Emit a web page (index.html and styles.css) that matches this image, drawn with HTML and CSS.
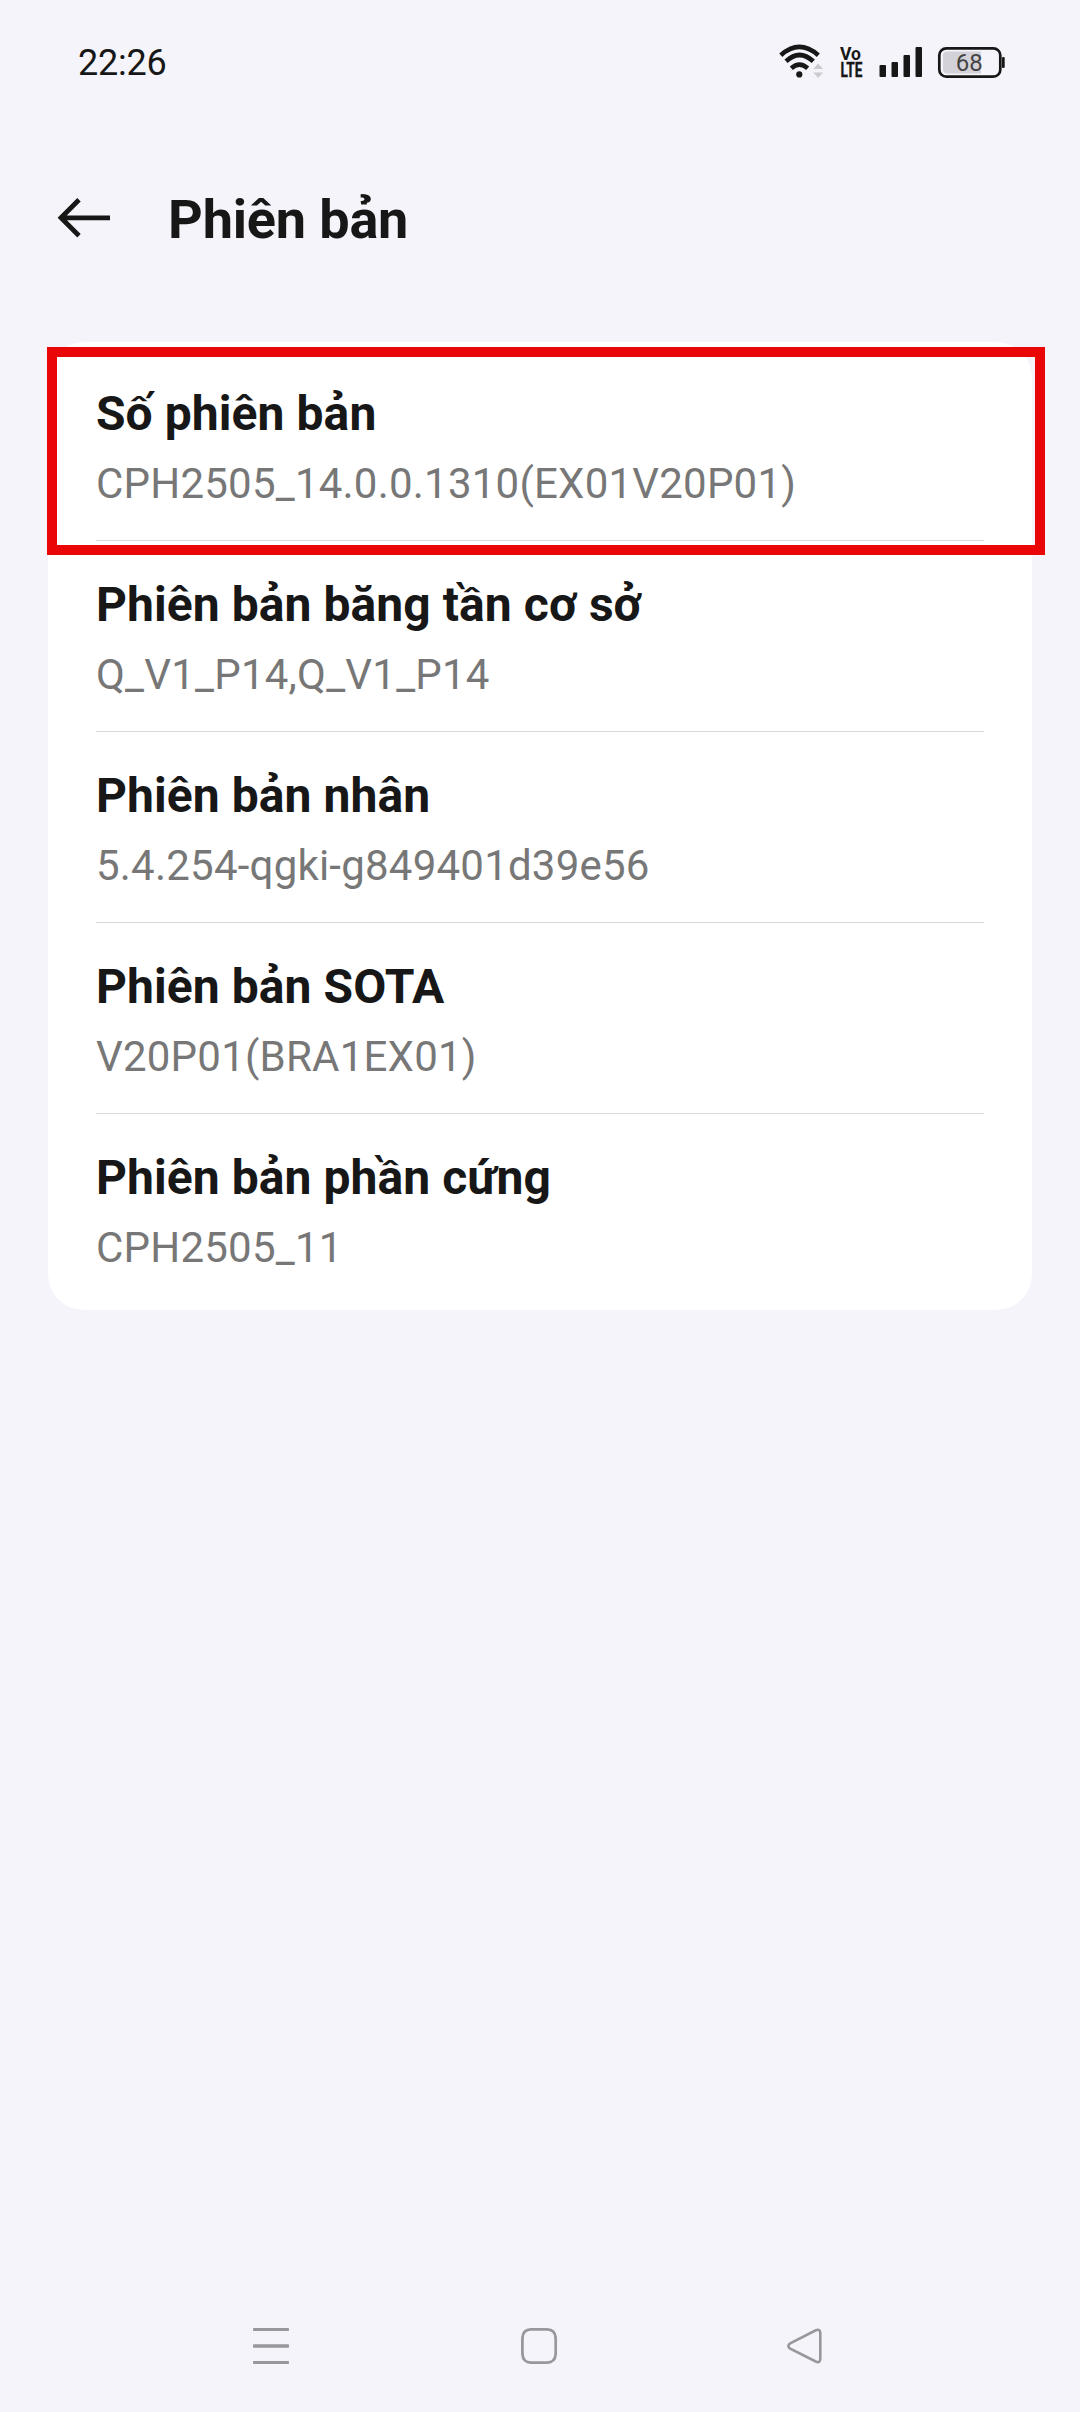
FILE: index.html
```html
<!DOCTYPE html>
<html lang="vi">
<head>
<meta charset="utf-8">
<title>Phiên bản</title>
<link rel="stylesheet" href="styles.css">
</head>
<body>
<div class="screen">
  <div class="status">
    <span class="time">22:26</span>
    <svg class="status-icons" width="230" height="40" viewBox="776 42 230 40">
      <g fill="none" stroke="#171717" stroke-width="4.6">
        <path d="M780.8 55.2Q799.3 38.6 818.3 55.2"/>
        <path d="M786 61.3Q799.5 48.7 813.3 61.3"/>
        <path d="M791.3 68.2Q799.4 61 807.7 68.2"/>
      </g>
      <circle cx="799.3" cy="74.4" r="3.1" fill="#171717"/>
      <path d="M813.3 69L818.2 63.5L823 69ZM813.3 72.5H823L818.2 78Z" fill="#cbcbce"/>
      <g class="volte">
        <text x="840" y="59.8" font-size="18" textLength="21" lengthAdjust="spacingAndGlyphs">Vo</text>
        <text x="840.5" y="76.6" font-size="19.5" textLength="22" lengthAdjust="spacingAndGlyphs" stroke="#171717" stroke-width=".4">LTE</text>
      </g>
      <g fill="#171717">
        <rect x="879.5" y="65" width="6.5" height="12" rx="1"/>
        <rect x="891.5" y="62" width="6.5" height="15" rx="1"/>
        <rect x="903.5" y="55" width="6.5" height="22" rx="1"/>
        <rect x="915.5" y="47" width="6.5" height="30" rx="1"/>
        <rect x="1002" y="57" width="2.7" height="11" rx="1"/>
      </g>
      <path d="M947 51.5H981V73.5H947Q943 73.5 943 69.5V55.5Q943 51.5 947 51.5Z" fill="#d3d2d8"/>
      <rect x="939.3" y="48.3" width="61" height="28.4" rx="7" fill="none" stroke="#171717" stroke-width="2.7"/>
      <text class="level" x="969.3" y="71" text-anchor="middle">68</text>
    </svg>
  </div>
  <header class="header">
    <svg width="54" height="42" viewBox="57 197 54 42" fill="none" stroke="#171717" stroke-width="4.8">
      <path d="M110 217.8H61M79 199.8L61 217.8L79 235.8"/>
    </svg>
    <h1 class="title">Phiên bản</h1>
  </header>
  <main class="card">
    <div class="row"><h2 class="name">Số phiên bản</h2><p class="value">CPH2505_14.0.0.1310(EX01V20P01)</p></div>
    <div class="row"><h2 class="name">Phiên bản băng tần cơ sở</h2><p class="value">Q_V1_P14,Q_V1_P14</p></div>
    <div class="row"><h2 class="name">Phiên bản nhân</h2><p class="value">5.4.254-qgki-g849401d39e56</p></div>
    <div class="row"><h2 class="name">Phiên bản SOTA</h2><p class="value">V20P01(BRA1EX01)</p></div>
    <div class="row"><h2 class="name">Phiên bản phần cứng</h2><p class="value">CPH2505_11</p></div>
    <div class="highlight"></div>
  </main>
  <nav class="nav">
    <svg width="36" height="36" viewBox="0 0 36 36" fill="#98979b"><rect width="36" height="3" rx=".8"/><rect y="16.3" width="36" height="3.4" rx=".8"/><rect y="33" width="36" height="3" rx=".8"/></svg>
    <svg class="home" width="36" height="36" viewBox="0 0 36 36" fill="none" stroke="#98979b" stroke-width="2.8"><path d="M10 1.4Q18 1.2 26 1.4Q34 1.6 34.6 9.5Q35 18 34.6 26.5Q34 34.4 26 34.6Q18 34.8 10 34.6Q2 34.4 1.5 26.5Q1.2 18 1.5 9.5Q2 1.6 10 1.4Z"/></svg>
    <svg width="36" height="36" viewBox="0 0 36 36" fill="none" stroke="#98979b" stroke-width="2.6"><path d="M3.2 15.4L28.8 2.3Q33.3 .5 33.3 5.2V30.8Q33.3 35.5 28.8 33.5L3.2 20.6Q-.5 18 3.2 15.4Z"/></svg>
  </nav>
</div>
</body>
</html>
```
FILE: styles.css
```css
* { box-sizing: border-box; }
body { margin: 0; background: #f4f4fa; color: #171717; font-family: Roboto, "Noto Sans", sans-serif; }
h1, h2, p { margin: 0; white-space: nowrap; }
svg { display: block; flex: none; }
.screen { display: flex; flex-direction: column; width: 1080px; height: 2412px; }
.status { display: flex; justify-content: space-between; align-items: center; height: 124px; padding: 0 74px 0 78px; }
.time { padding-top: 2px; font-size: 36px; line-height: 44px; letter-spacing: -0.25px; }
.volte { font-weight: 700; fill: #171717; }
.level { font-size: 24px; font-weight: 400; fill: #444; }
.header { display: flex; align-items: center; gap: 57px; height: 188px; padding: 0 57px; }
.title { padding-top: 3px; font-size: 54px; line-height: 64px; font-weight: 700; letter-spacing: -0.17px; }
.card { position: relative; height: 968px; margin: 30px 48px 0; padding: 8px 48px 6px; border-radius: 36px; background: #fff; }
.row { display: flex; flex-direction: column; gap: 17px; height: 191px; padding-top: 36px; border-bottom: 1px solid #d9d9d9; }
.row:nth-child(5) { border-bottom: 0; }
.name { font-size: 48px; line-height: 56px; font-weight: 700; letter-spacing: 0.07px; }
.value { font-size: 42px; line-height: 50px; letter-spacing: 0.22px; color: #777; }
.highlight { position: absolute; left: -1px; top: 5px; width: 998px; height: 208px; border: 10px solid #ea0606; }
.nav { display: flex; justify-content: space-between; margin: auto 257px 48px 253px; }
.home { margin-left: 2px; }
```
